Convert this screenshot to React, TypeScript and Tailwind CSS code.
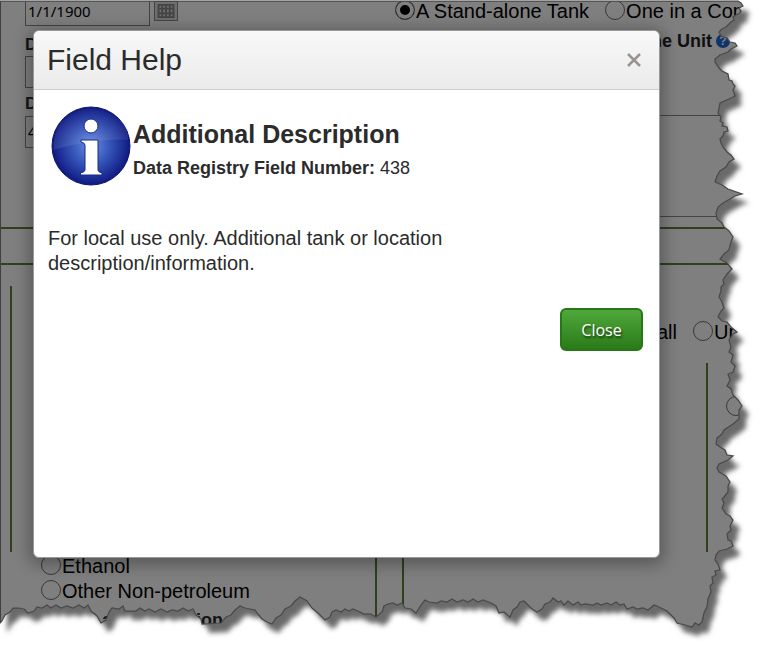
import type { ReactNode } from "react"

const TORN_EDGE =
  "M0 1 H738 L741 3 L743 6 L739 8 L741 11 L740 13 L736 15 L733 17 L734 20 L731 22 L726 27 L722 29 L719 32 L721 36 L727 38 L730 42 L735 43 L737 46 L731 49 L728 52 L720 55 L715 59 L715 62 L719 68 L722 71 L728 74 L729 80 L732 81 L733 84 L735 86 L733 90 L735 96 L729 99 L720 103 L719 108 L718 113 L721 117 L720 121 L723 123 L722 126 L727 127 L728 131 L724 132 L723 136 L720 139 L721 143 L723 147 L727 152 L731 155 L734 159 L729 162 L726 167 L720 171 L717 176 L715 182 L722 185 L728 189 L742 194 L735 196 L730 199 L723 203 L718 207 L716 213 L717 219 L722 223 L724 227 L729 231 L733 237 L731 242 L729 250 L724 254 L720 259 L727 263 L732 269 L727 274 L723 280 L724 284 L721 287 L721 291 L719 297 L722 302 L724 308 L721 311 L718 317 L722 321 L727 322 L731 327 L737 332 L733 334 L729 340 L731 347 L729 352 L733 355 L731 362 L735 366 L733 372 L728 374 L730 380 L727 386 L731 389 L733 395 L738 400 L742 406 L739 410 L739 419 L733 424 L724 430 L722 434 L717 438 L716 444 L720 447 L725 450 L727 455 L733 456 L728 460 L719 464 L717 468 L719 472 L726 476 L730 482 L728 486 L728 492 L724 497 L722 499 L724 503 L722 508 L726 514 L730 516 L733 520 L730 526 L731 530 L727 534 L728 540 L731 541 L733 546 L727 549 L719 551 L716 555 L715 560 L718 564 L720 570 L715 571 L716 575 L712 577 L713 583 L710 586 L711 592 L708 599 L707 607 L704 613 L702 622 L699 625 L695 623 L692 627 L685 625 L677 623 L674 618 L671 615 L667 611 L657 606 L654 605 L648 610 L643 608 L637 609 L633 607 L627 609 L624 604 L620 605 L616 602 L611 605 L607 603 L601 605 L597 603 L593 605 L585 604 L581 605 L578 602 L573 605 L568 601 L564 605 L561 601 L558 602 L553 598 L550 602 L545 604 L542 609 L537 612 L532 609 L528 605 L524 601 L520 602 L517 607 L513 610 L510 617 L504 612 L499 613 L496 606 L491 603 L483 600 L478 602 L473 599 L468 602 L463 600 L457 602 L452 599 L447 602 L441 601 L437 603 L429 602 L425 600 L421 605 L416 613 L411 609 L405 608 L402 603 L397 605 L393 603 L388 604 L384 606 L382 612 L376 617 L371 614 L364 614 L358 611 L353 609 L349 611 L345 609 L341 612 L336 610 L332 612 L330 617 L325 620 L319 614 L312 608 L307 601 L300 597 L295 601 L291 606 L285 609 L281 615 L276 618 L272 624 L267 622 L262 619 L258 614 L255 610 L250 609 L245 608 L240 606 L235 610 L231 615 L226 617 L221 623 L202 624 L201 619 L196 615 L193 609 L188 611 L183 608 L178 611 L172 610 L167 612 L161 609 L155 612 L149 609 L145 611 L140 608 L136 611 L129 611 L125 611 L123 606 L119 609 L112 608 L109 612 L106 620 L101 623 L97 616 L91 611 L88 605 L84 608 L79 605 L73 608 L67 606 L61 608 L56 605 L51 608 L47 605 L42 608 L37 607 L34 611 L28 613 L24 609 L18 608 L13 608 L10 612 L5 615 L2 621 L0 623 Z"

function Radio({ name, checked, children }: { name: string; checked?: boolean; children: ReactNode }) {
  return (
    <label className="flex h-[25px] items-center whitespace-nowrap text-xl leading-[25px] text-black">
      <input
        type="radio"
        name={name}
        defaultChecked={checked}
        className="mr-px mb-1 h-5 w-5 shrink-0 appearance-none rounded-full border border-[#707070] checked:bg-black checked:shadow-[inset_0_0_0_4px_#ffffff]"
      />
      {children}
    </label>
  )
}

function InfoIcon() {
  return (
    <svg viewBox="0 0 80 80" className="h-20 w-20 shrink-0" aria-hidden="true">
      <defs>
        <radialGradient id="ball" cx="50%" cy="50%" r="50%">
          <stop offset="0" stopColor="#6a8ce2" />
          <stop offset="0.5" stopColor="#3453b8" />
          <stop offset="0.85" stopColor="#1a2b92" />
          <stop offset="1" stopColor="#10197f" />
        </radialGradient>
        <linearGradient id="gloss" x1="0" y1="0" x2="0" y2="1">
          <stop offset="0" stopColor="#ffffff" stopOpacity="0.02" />
          <stop offset="1" stopColor="#ffffff" stopOpacity="0.1" />
        </linearGradient>
      </defs>
      <circle cx="40" cy="40" r="39" fill="url(#ball)" stroke="#0c146f" strokeWidth="1" />
      <path d="M3 44 C1 18 19 3 40 3 S79 18 77 34 C60 32 24 37 3 44Z" fill="url(#gloss)" />
      <g fill="#ffffff" stroke="#18298c" strokeWidth="1">
        <circle cx="40" cy="20" r="7" />
        <path d="M30 34 H47 V64 Q47 66 51 67 V69 H29.500 V67 Q34 66 34 64 V39 Q34 37 30 36Z" />
      </g>
    </svg>
  )
}

function TankForm() {
  return (
    <form className="min-h-screen border-l border-t border-[#666666] bg-white">
      <div className="flex h-[226px]">
        <div className="w-[394px] shrink-0 pl-6 text-[17px]">
          <div className="flex h-[25px]">
            <input
              aria-label="Date installed"
              defaultValue="1/1/1900"
              className="w-[125px] border border-t-0 border-[#888888] px-0.5 pb-1 font-['Noto_Sans',sans-serif] text-[15px] leading-5 text-black"
            />
            <button type="button" aria-label="Pick a date" className="ml-1 h-5 w-6 border border-[#888888] bg-[#dddddd] p-0.5">
              <svg viewBox="0 0 18 15" className="h-full w-full">
                <path d="M1 1H17V14H1Z M1 5H17 M1 10H17 M5 1V14 M9 1V14 M13 1V14" fill="none" stroke="#888888" strokeWidth="2" />
              </svg>
            </button>
          </div>
          <label htmlFor="registered" className="mt-2 block h-[22px] font-bold leading-[22px]">
            Date
          </label>
          <input id="registered" className="block h-8 w-[125px] border border-[#888888]" />
          <label htmlFor="description" className="mt-1 block h-6 font-bold leading-6">
            Description
          </label>
          <input
            id="description"
            defaultValue="438"
            className="block h-8 w-[125px] border border-[#888888] px-0.5 font-['Noto_Sans',sans-serif] text-base text-black"
          />
        </div>
        <div className="min-w-0 flex-1">
          <div className="-mt-0.5 flex h-[23px] gap-4">
            <Radio name="tank" checked>
              A Stand-alone Tank
            </Radio>
            <Radio name="tank">One in a Compartment</Radio>
          </div>
          <div className="flex h-[38px] items-center justify-end gap-1 pr-[38px]">
            <label htmlFor="unit" className="text-lg font-bold text-[#222222]">
              Compartment of the Unit
            </label>
            <span className="flex h-3.5 w-3.5 items-center justify-center rounded-full bg-[#1f66d8] text-xs font-bold text-white">?</span>
          </div>
          <textarea id="unit" className="mt-[55px] block h-[102px] w-full resize-none border border-[#888888]" />
        </div>
      </div>
      <div className="h-[38px] border-y-2 border-[#5f8038]" />
      <div className="flex h-[287px] justify-between pl-[9px]">
        <div className="mt-[21px] w-1/2 border-l-2 border-[#5f8038]" />
        <div className="w-[300px]">
          <div className="flex justify-end gap-4 pt-[55px]">
            <span className="text-xl leading-[25px] text-black">Single wall</span>
            <div className="w-[75px]">
              <Radio name="wall">Unknown</Radio>
            </div>
          </div>
          <div className="mt-[18px] ml-auto h-[189px] w-[62px] border-l-2 border-[#5f8038] pt-8 pl-[18px]">
            <Radio name="other">Other</Radio>
          </div>
        </div>
      </div>
      <div className="flex h-[99px] pt-0.5 text-xl">
        <div className="w-[376px] shrink-0 border-r-2 border-[#5f8038] pl-6">
          <div className="pl-4">
            <Radio name="substance">Ethanol</Radio>
            <Radio name="substance">Other Non-petroleum</Radio>
          </div>
          <div className="pt-1 text-lg leading-6 font-bold">Date of Last Inspection</div>
        </div>
        <div className="ml-[25px] w-full border-l-2 border-[#5f8038]" />
      </div>
    </form>
  )
}

export default function App() {
  return (
    <div className="relative min-h-screen overflow-hidden bg-white font-['Liberation_Sans',Arial,sans-serif] text-[#2b2b2b]">
      <TankForm />

      {/* Dialog over the dimmed form */}
      <div className="absolute inset-0 bg-black/50 pt-[30px] pr-[108px] pl-[33px]">
        <section
          role="dialog"
          aria-labelledby="dialog-title"
          className="min-h-[528px] rounded-md border border-[#999999] bg-white shadow-[0_3px_16px_4px_rgba(0,0,0,0.3)]"
        >
          <header className="flex h-[59px] items-center justify-between rounded-t-md border-b border-[#cccccc] bg-linear-to-b from-[#f8f8f8] to-[#ebebeb] pr-[15px] pl-[13px]">
            <h2 id="dialog-title" className="text-[30px] leading-9">
              Field Help
            </h2>
            <button type="button" aria-label="Close dialog" className="flex h-5 w-5 items-center justify-center text-[#9b928f]">
              <svg viewBox="0 0 14 14" className="h-3.5 w-3.5">
                <path d="M1 1 L13 13 M13 1 L1 13" stroke="currentColor" strokeWidth="2.5" />
              </svg>
            </button>
          </header>
          <div className="pt-4 pr-4 pl-3.5">
            <div className="flex gap-0.5 pl-[3px]">
              <InfoIcon />
              <div className="pt-3">
                <h3 className="text-[25px] leading-8 font-bold">Additional Description</h3>
                <p className="pt-1 text-lg leading-7">
                  <strong>Data Registry Field Number:</strong> 438
                </p>
              </div>
            </div>
            <p className="mt-10 max-w-[440px] text-xl leading-[25px]">
              For local use only. Additional tank or location description/information.
            </p>
            <div className="mt-8 flex justify-end">
              <button
                type="button"
                className="h-[43px] w-[83px] rounded-md border-2 border-[#277718] bg-linear-to-b from-[#4fa83b] to-[#2a7b18] font-['Open_Sans',sans-serif] text-base text-white [text-shadow:1px_2px_2px_rgba(0,0,0,0.6)]"
              >
                Close
              </button>
            </div>
          </div>
        </section>
      </div>

      {/* Torn paper edge */}
      <svg
        viewBox="0 0 768 651"
        preserveAspectRatio="none"
        className="pointer-events-none absolute inset-0 h-full w-full"
        aria-hidden="true"
      >
        <defs>
          <clipPath id="outside">
            <path d={"M0 0H768V651H0Z " + TORN_EDGE} clipRule="evenodd" />
          </clipPath>
          <filter id="soft" x="-10%" y="-10%" width="120%" height="120%">
            <feGaussianBlur stdDeviation="2.5" />
          </filter>
        </defs>
        <g clipPath="url(#outside)">
          <rect width="768" height="651" fill="#ffffff" />
          <path d={TORN_EDGE} transform="translate(7 9)" fill="#6a6a6a" filter="url(#soft)" />
        </g>
        <path d={TORN_EDGE} fill="none" stroke="#484848" strokeWidth="1.25" />
      </svg>
    </div>
  )
}
